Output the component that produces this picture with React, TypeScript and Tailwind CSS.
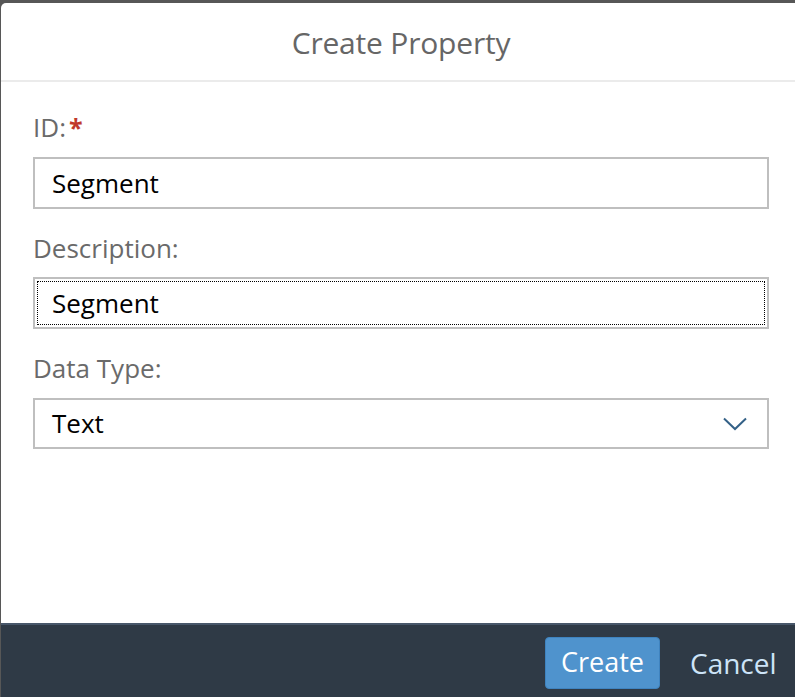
import React from "react";

const font = { fontFamily: '"Open Sans", "Noto Sans", Arial, sans-serif' };

export default function App() {
  return (
    <div className="w-[795px] h-[697px] bg-[#575757] overflow-hidden pt-[3px] pl-[1px]" style={font}>
      <div className="w-[800px] h-[694px] bg-white rounded-tl-[5px] flex flex-col">
        <div className="h-[79px] border-b-2 border-[#ebebeb] flex items-center justify-center shrink-0">
          <span className="text-[30px] text-[#666666] leading-none mt-[2px] tracking-[-0.2px]">Create Property</span>
        </div>
        <div className="flex-1 flex flex-col px-[32px] pt-[29px]">
          <label className="h-[32px] leading-[32px] text-[26px] text-[#6a6a6a] flex items-center">
            ID:<span className="text-[#c0392b] ml-[3px] font-bold text-[25px]">*</span>
          </label>
          <div className="mt-[14px] h-[52px] border-2 border-[#bfbfbf] flex items-center pl-[17px] text-[26px] text-black">
            Segment
          </div>
          <label className="mt-[23px] h-[32px] leading-[32px] text-[26px] text-[#6a6a6a]">Description:</label>
          <div className="mt-[13px] h-[52px] border-2 border-[#bfbfbf] flex items-center pl-[17px] text-[26px] text-black outline-1 outline-dotted outline-black outline-offset-[-5px]">
            Segment
          </div>
          <label className="mt-[23px] h-[32px] leading-[32px] text-[26px] text-[#6a6a6a]">Data Type:</label>
          <div className="mt-[14px] h-[51px] border-2 border-[#bfbfbf] flex items-center justify-between pl-[17px] pr-[20px] text-[26px] text-black">
            <span>Text</span>
            <svg width="24" height="14" viewBox="0 0 24 14" fill="none">
              <path d="M1 1.5 L12 12 L23 1.5" stroke="#346187" strokeWidth="2" />
            </svg>
          </div>
        </div>
        <div className="h-[74px] bg-[#2f3a46] border-t-2 border-[#48576a] flex items-center pl-[544px] gap-[14px] shrink-0">
          <button className="h-[52px] w-[115px] rounded-[4px] bg-[#4f93cd] border border-[#3f83bf] text-white text-[27px] mt-[3px]">
            Create
          </button>
          <button className="h-[52px] px-[16px] text-[#cde4f8] text-[28px] mt-[3px]">Cancel</button>
        </div>
      </div>
    </div>
  );
}
